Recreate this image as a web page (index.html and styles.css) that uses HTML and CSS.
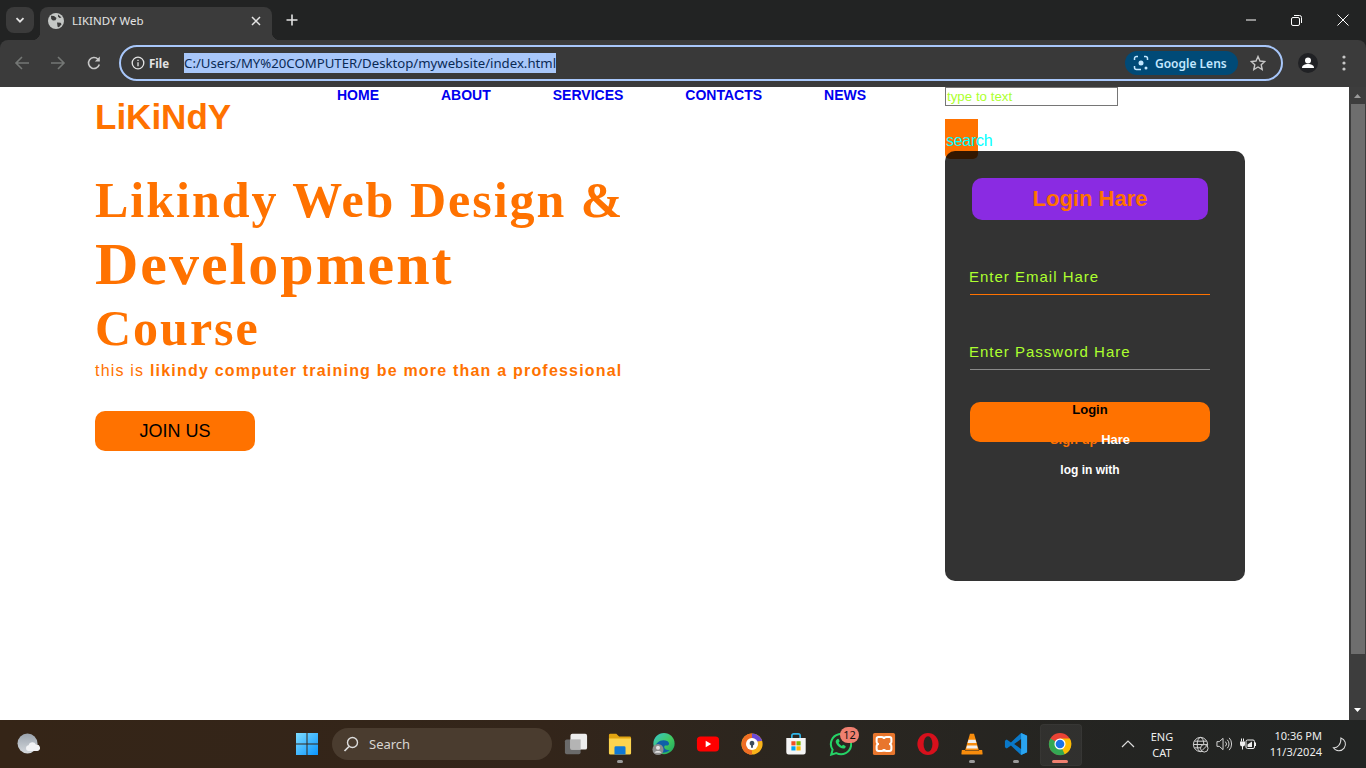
FILE: index.html
```html
<!DOCTYPE html>
<html lang="en">
<head>
<meta charset="utf-8">
<title>LIKINDY Web</title>
<link rel="stylesheet" href="styles.css">
</head>
<body>
<div class="chrome">
  <div class="tabstrip">
    <div class="tab-menu"><svg width="12" height="12" viewBox="0 0 12 12"><path d="M2.5 4.2 6 7.7l3.5-3.5" fill="none" stroke="#e3e3e3" stroke-width="1.8"/></svg></div>
    <div class="tab">
      <svg class="fav" width="16" height="16" viewBox="0 0 16 16"><circle cx="8" cy="8" r="8" fill="#c4c7c5"/><path d="M3 2.8 6 3l2.5 2-1 2.2-2.6.4L3.2 6ZM9 9.5l3.6.2 1 1.6-2.7 3-1.3-.5ZM10 1.5l3.5 3-2 .4L10 3.5Z" fill="#3b3b3b"/></svg>
      <span class="tab-title">LIKINDY Web</span>
      <svg class="tab-x" width="10" height="10" viewBox="0 0 10 10"><path d="M1 1l8 8M9 1 1 9" stroke="#e3e3e3" stroke-width="1.5"/></svg>
    </div>
    <svg class="new-tab" width="12" height="12" viewBox="0 0 12 12"><path d="M6 .5v11M.5 6h11" stroke="#e3e3e3" stroke-width="1.6"/></svg>
    <div class="win-controls">
      <svg width="10" height="2" viewBox="0 0 10 2"><path d="M0 1h10" stroke="#fff"/></svg>
      <svg width="11" height="11" viewBox="0 0 11 11"><rect x=".5" y="2.5" width="8" height="8" rx="1.5" fill="none" stroke="#fff"/><path d="M3 .5h5.5a2 2 0 0 1 2 2V8" fill="none" stroke="#fff"/></svg>
      <svg width="12" height="12" viewBox="0 0 12 12"><path d="M.5.5l11 11M11.500.5l-11 11" stroke="#fff"/></svg>
    </div>
  </div>
  <div class="toolbar">
    <svg class="nav-ic" width="16" height="16" viewBox="0 0 16 16"><path d="M15 8H2M8 2 2 8l6 6" fill="none" stroke="#747775" stroke-width="1.6"/></svg>
    <svg class="nav-ic" width="16" height="16" viewBox="0 0 16 16"><path d="M1 8h13M8 2l6 6-6 6" fill="none" stroke="#747775" stroke-width="1.6"/></svg>
    <svg class="nav-ic reload" width="16" height="16" viewBox="0 0 16 16"><path d="M13.300 9.500A5.500 5.500 0 1 1 12 4.200" fill="none" stroke="#c7c7c7" stroke-width="1.600"/><path d="M13.800 1.500v5h-5z" fill="#c7c7c7"/></svg>
    <div class="omnibox">
      <svg class="info" width="14" height="14" viewBox="0 0 14 14"><circle cx="7" cy="7" r="5.800" fill="none" stroke="#e3e3e3" stroke-width="1.300"/><path d="M7 6.300v4M7 3.700v1.400" stroke="#e3e3e3" stroke-width="1.300"/></svg>
      <span class="file-chip">File</span>
      <span class="url">C:/Users/MY%20COMPUTER/Desktop/mywebsite/index.html</span>
      <div class="lens">
        <svg width="16" height="16" viewBox="0 0 16 16"><path d="M1.500 5V3.500a2 2 0 0 1 2-2H5M11 1.500h1.500a2 2 0 0 1 2 2V5M1.500 11v1.500a2 2 0 0 0 2 2H8" fill="none" stroke="#c2e7ff" stroke-width="1.500"/><circle cx="8" cy="8" r="2.500" fill="#c2e7ff"/><circle cx="13" cy="13" r="1.500" fill="#c2e7ff"/></svg>
        <span>Google Lens</span>
      </div>
      <svg class="star" width="16" height="16" viewBox="0 0 16 16"><path d="M8 1.500 10 6l4.800.5-3.600 3.200 1 4.800L8 12l-4.200 2.500 1-4.800L1.200 6.500 6 6Z" fill="none" stroke="#c7c7c7" stroke-width="1.400"/></svg>
    </div>
    <div class="avatar"><svg width="20" height="20" viewBox="0 0 20 20"><circle cx="10" cy="10" r="10" fill="#202124"/><circle cx="10" cy="7.500" r="3" fill="#fff"/><path d="M4 15c0-3 3-4 6-4s6 1 6 4z" fill="#fff"/></svg></div>
    <svg class="dots" width="4" height="16" viewBox="0 0 4 16"><circle cx="2" cy="2" r="1.600" fill="#c7c7c7"/><circle cx="2" cy="8" r="1.600" fill="#c7c7c7"/><circle cx="2" cy="14" r="1.600" fill="#c7c7c7"/></svg>
  </div>
</div>

<div class="viewport">
  <main class="page">
    <div class="left-col">
      <header class="top-row">
        <h2 class="logo">LiKiNdY</h2>
        <nav class="menu">
          <a>HOME</a><a>ABOUT</a><a>SERVICES</a><a>CONTACTS</a><a>NEWS</a>
        </nav>
      </header>
      <section class="hero">
        <h1 class="hero-title"><span class="line">Likindy Web Design &amp;</span><span class="line big">Development</span><span class="line">Course</span></h1>
        <p class="hero-sub">this is <b>likindy computer training be more than a professional</b></p>
        <button class="join">JOIN US</button>
      </section>
    </div>
    <div class="right-col">
      <div class="search-box"><span class="search-input">type to text</span></div>
      <div class="search-btn">search</div>
      <form class="login-card">
        <h2 class="login-title">Login Hare</h2>
        <div class="field orange-line">Enter Email Hare</div>
        <div class="field grey-line">Enter Password Hare</div>
        <div class="login-btn">Login</div>
        <p class="signup"><span class="orange">Sign up</span> Hare</p>
        <p class="login-with">log in with</p>
      </form>
    </div>
  </main>
  <div class="scrollbar">
    <svg class="sb-arrow" width="17" height="17" viewBox="0 0 17 17"><path d="M5 11 8.500 7l3.500 4z" fill="#9a9a9a"/></svg>
    <div class="sb-track"><div class="sb-thumb"></div></div>
    <svg class="sb-arrow" width="17" height="17" viewBox="0 0 17 17"><path d="M5 5h7L8.500 9z" fill="#fff"/></svg>
  </div>
</div>

<footer class="taskbar">
  <svg class="weather" width="24" height="24" viewBox="0 0 24 24"><defs><linearGradient id="wm" x1="0" y1="0" x2="0" y2="1"><stop offset="0" stop-color="#9aa3ad"/><stop offset="1" stop-color="#d4d8dc"/></linearGradient></defs><circle cx="10.500" cy="11.500" r="10" fill="url(#wm)"/><path d="M11 19a3 3 0 0 1 .5-5.800 4 4 0 0 1 7.500-.5 3.200 3.200 0 0 1 1.500 6.300z" fill="#f2f3f5"/></svg>
  <svg class="start" width="24" height="24" viewBox="0 0 24 24"><defs><linearGradient id="wn" x1="0" y1="0" x2="1" y2="1"><stop offset="0" stop-color="#7ddcff"/><stop offset="1" stop-color="#0a95ff"/></linearGradient></defs><path d="M1 1h10.500v10.500H1zM12.500 1H23v10.500H12.500zM1 12.500h10.500V23H1zM12.500 12.500H23V23H12.500z" fill="url(#wn)"/></svg>
  <div class="tb-search">
    <svg width="16" height="16" viewBox="0 0 16 16"><circle cx="9.500" cy="6.500" r="5" fill="none" stroke="#ddd" stroke-width="1.400"/><path d="M6 10.500 1.500 15" stroke="#ddd" stroke-width="1.700"/></svg>
    <span>Search</span>
  </div>
  <div class="tb-apps">
    <div class="app"><svg viewBox="0 0 26 26"><rect x="1" y="8" width="17" height="16" rx="2" fill="#6a6a6a"/><rect x="7" y="2" width="18" height="17" rx="2" fill="#ededed"/><rect x="7" y="8" width="11" height="11" fill="#b4b4b4"/></svg></div>
    <div class="app running"><svg viewBox="0 0 26 26"><path d="M1 3.500a1.500 1.500 0 0 1 1.500-1.500H9l3 3h11.500A1.500 1.500 0 0 1 25 6.500V8H1z" fill="#e0a411"/><path d="M1 7h24v16a1.500 1.500 0 0 1-1.500 1.500h-21A1.500 1.500 0 0 1 1 23z" fill="#fbd44f"/><path d="M7 17a1.500 1.500 0 0 1 1.500-1.500h9A1.500 1.500 0 0 1 19 17v7.500H7z" fill="#0f78d4"/></svg></div>
    <div class="app"><svg viewBox="0 0 26 26"><defs><linearGradient id="eg" x1="0" y1="0" x2="1" y2="1"><stop offset="0" stop-color="#37c6d0"/><stop offset=".55" stop-color="#41c95f"/><stop offset="1" stop-color="#1aa35e"/></linearGradient></defs><circle cx="13" cy="12.500" r="11.500" fill="url(#eg)"/><path d="M3 18c1-8 8-11 14-8 2 1.500 2 4 0 4.500h-3c-2 2 0 5 5 5-4 4-11 4.500-16-1.500z" fill="#0f5fa8"/><circle cx="6.500" cy="19" r="6" fill="#8d8d8d"/><circle cx="6.500" cy="17" r="2.200" fill="#e3e3e3"/><path d="M2.700 22.500c.5-2.500 7-2.500 7.600 0z" fill="#e3e3e3"/></svg></div>
    <div class="app"><svg viewBox="0 0 26 26"><rect x="1" y="5" width="24" height="16" rx="4" fill="#f00"/><path d="M10.500 9.500v7l6-3.500z" fill="#fff"/></svg></div>
    <div class="app"><svg viewBox="0 0 26 26"><circle cx="13" cy="13" r="11.500" fill="#f9b31a"/><path d="M2 13A11 11 0 0 1 13 1.500v5A7 7 0 0 0 7 13c0 3 2 6 6 7v4.500C6 24.500 1.500 19 2 13z" fill="#ee6d24"/><path d="M13 1.500c5 0 9.500 3.500 11 8l-7 1a5 5 0 0 0-4-4z" fill="#6a4bd8"/><circle cx="13" cy="13" r="6.500" fill="#fff"/><path d="M13 9.500a2.600 2.600 0 0 0-1 5v2.500h2v-2.500a2.600 2.600 0 0 0-1-5z" fill="#3c4c5c"/></svg></div>
    <div class="app"><svg viewBox="0 0 26 26"><path d="M8.500 7V4a2 2 0 0 1 2-2h5a2 2 0 0 1 2 2v3" fill="none" stroke="#2fb5e8" stroke-width="1.800"/><path d="M2.500 6.500h21V22a2.500 2.500 0 0 1-2.500 2.500H5A2.500 2.500 0 0 1 2.500 22z" fill="#f5f5f5"/><rect x="8" y="10" width="4.500" height="4.500" fill="#f25022"/><rect x="13.500" y="10" width="4.500" height="4.500" fill="#7fba00"/><rect x="8" y="15.500" width="4.500" height="4.500" fill="#00a4ef"/><rect x="13.500" y="15.500" width="4.500" height="4.500" fill="#ffb900"/></svg></div>
    <div class="app"><svg viewBox="0 0 26 26"><path d="M3.500 24.500 5 19.200A11 11 0 1 1 9 22.800z" fill="none" stroke="#25d366" stroke-width="2.200"/><path d="M9.500 8c1-1 2-.8 2.400.2l.6 1.600c.2.600-.7 1.400-1 1.900.7 1.400 2 2.700 3.500 3.400.5-.5 1.300-1.400 1.900-1.100l1.600.8c1 .5.900 1.500 0 2.400-1 1-3 1-5.500-.5-2-1.200-3.500-2.800-4.300-4.800-.7-1.600-.3-2.900.8-3.900z" fill="#25d366"/></svg><span class="badge">12</span></div>
    <div class="app"><svg viewBox="0 0 26 26"><rect x="1" y="1" width="24" height="24" rx="2" fill="#e8762d"/><path d="M7 5.500h3.500c2 0 2.500 1.500 2.500 2 0-.5.500-2 2.500-2H19a2 2 0 0 1 2 2v3c0 1.500-1.500 2.500-2.500 2.500 1 0 2.500 1 2.500 2.500v3a2 2 0 0 1-2 2h-3.500c-2 0-2.500-1.500-2.500-2 0 .5-.500 2-2.500 2H7a2 2 0 0 1-2-2v-3c0-1.500 1.500-2.500 2.500-2.500C6.500 13 5 12 5 10.500v-3a2 2 0 0 1 2-2z" fill="none" stroke="#fff" stroke-width="2.200"/></svg></div>
    <div class="app"><svg viewBox="0 0 26 26"><ellipse cx="13" cy="13" rx="11.500" ry="12" fill="#d7101c"/><ellipse cx="13" cy="13" rx="4.800" ry="8.500" fill="#2b2722"/></svg></div>
    <div class="app running"><svg viewBox="0 0 26 26"><path d="M10.800 2h4.400l5.300 18H5.500z" fill="#f78c0c"/><path d="M9.200 8.500h7.600l1 3.500H8.200zM7.700 14.500h10.600l1 3.500H6.700z" fill="#efefef"/><path d="M2 19.500h3.500v1h15v-1H24l.5 4a1 1 0 0 1-1 1h-21a1 1 0 0 1-1-1z" fill="#f78c0c"/></svg></div>
    <div class="app running"><svg viewBox="0 0 26 26"><path d="M18.500 1 25 4v18l-6.500 3-11-10.500L3 18l-2-1.500v-7L3 8l4.500 3.500z" fill="#0a78c8"/><path d="M18.500 1 25 4v18l-6.500 3z" fill="#2aa4f0"/><path d="M18.500 7.500v11L11 13z" fill="#262622"/></svg></div>
    <div class="app active"><svg viewBox="0 0 26 26"><circle cx="13" cy="13" r="12" fill="#ea4335"/><path d="M13 13 2.600 7A12 12 0 0 0 8 24zM13 13 8 24A12 12 0 0 0 25 13z" fill="#34a853"/><path d="M13 7h10.700A12 12 0 0 1 18 24L13 13z" fill="#fbbc04"/><circle cx="13" cy="13" r="6" fill="#fff"/><circle cx="13" cy="13" r="4.700" fill="#1a73e8"/></svg></div>
  </div>
  <div class="tray">
    <svg class="chev" width="14" height="8" viewBox="0 0 14 8"><path d="M1 7 7 1l6 6" fill="none" stroke="#ddd" stroke-width="1.200"/></svg>
    <div class="lang"><span>ENG</span><span>CAT</span></div>
    <svg class="tray-ic globe" width="17" height="17" viewBox="0 0 18 18"><g fill="none" stroke="#ddd"><circle cx="9" cy="9" r="7.500"/><ellipse cx="9" cy="9" rx="3.500" ry="7.500"/><path d="M1.500 9h15M2.500 5.500h13M2.500 12.500h13"/></g><circle cx="13" cy="13" r="4" fill="#242422" stroke="#ddd"/><path d="M10.500 15.500l5-5" stroke="#ddd"/></svg>
    <svg class="tray-ic vol" width="16" height="16" viewBox="0 0 17 16"><g fill="none" stroke="#ddd"><path d="M1 5.500h2.500L7.500 2v12l-4-3.500H1z"/><path d="M10 5.500a3.500 3.500 0 0 1 0 5M12 3.500a6.500 6.500 0 0 1 0 9M14 1.500a9.500 9.500 0 0 1 0 13"/></g></svg>
    <svg class="tray-ic batt" width="16" height="12" viewBox="0 0 16 12"><path d="M0 3.500h5v2.500a2.500 2.500 0 0 1-5 0z" fill="#eee"/><path d="M1.500 .5v3M3.500 .5v3M2.500 8v3.500" stroke="#eee"/><rect x="6" y="2" width="8.500" height="8.500" rx="1.500" fill="none" stroke="#eee"/><path d="M7.500 9V6.500L12 3.500V9z" fill="#eee"/><path d="M15.500 4.500v3.500" stroke="#eee"/></svg>
    <div class="clock"><span>10:36 PM</span><span>11/3/2024</span></div>
    <svg class="moon" width="15" height="15" viewBox="0 0 16 16"><path d="M9.500 1a7 7 0 1 1-8 10.500c4 .5 8.500-3.500 8-10.500z" fill="none" stroke="#ddd" stroke-width="1.100"/></svg>
  </div>
</footer>
</body>
</html>
```
FILE: styles.css
```css
* { box-sizing: border-box; }
html, body { margin: 0; padding: 0; height: 100%; overflow: hidden; }
body { width: 1366px; height: 768px; display: flex; flex-direction: column; font-family: "Liberation Sans", Arial, sans-serif; background: #fff; }

/* browser chrome */
.chrome { height: 87px; flex: none; background: #222323; font-family: "Noto Sans", "Open Sans", sans-serif; }
.tabstrip { height: 40px; display: flex; align-items: flex-start; padding: 7px 0 0 6px; }
.tab-menu { width: 28px; height: 26px; background: #3b3b3b; border-radius: 8px; display: flex; align-items: center; justify-content: center; }
.tab { width: 232px; height: 33px; margin-left: 6px; background: #3b3b3b; border-radius: 8px 8px 0 0; display: flex; align-items: center; padding: 0 11px 6px 8px; position: relative; }
.tab::before, .tab::after { content: ""; position: absolute; bottom: 0; width: 8px; height: 8px; }
.tab::before { left: -8px; background: radial-gradient(circle at 0 0, transparent 8px, #3b3b3b 8.5px); }
.tab::after { right: -8px; background: radial-gradient(circle at 100% 0, transparent 8px, #3b3b3b 8.5px); }
.fav { flex: none; }
.tab-title { margin-left: 8px; font-size: 11.500px; color: #e3e3e3; flex: 1; }
.new-tab { margin: 7px 0 0 14px; }
.win-controls { margin-left: auto; display: flex; align-items: center; height: 26px; padding-right: 17px; gap: 35px; }
.toolbar { height: 47px; background: #3b3b3b; display: flex; align-items: center; padding: 0 0 1px 14px; border-radius: 8px 8px 0 0; }
.nav-ic { margin-right: 20px; flex: none; }
.nav-ic.reload { margin-right: 17px; }
.omnibox { width: 1164px; height: 36px; border: 2px solid #a8c7fa; border-radius: 18px; background: #393939; display: flex; align-items: center; padding: 0 15px 0 10px; flex: none; }
.info { flex: none; }
.file-chip { margin-left: 4px; font-size: 11.500px; font-weight: 700; color: #e3e3e3; }
.url { margin-left: 15px; background: #a8c7fa; color: #0a2a55; font-size: 13.200px; line-height: 20px; height: 20px; white-space: nowrap; }
.lens { margin-left: auto; width: 113px; height: 24px; background: #004a77; border-radius: 12px; display: flex; align-items: center; padding: 0 0 0 8px; gap: 6px; color: #c2e7ff; font-size: 12px; font-weight: 600; white-space: nowrap; }
.star { margin-left: 12px; }
.avatar { margin-left: 15px; height: 20px; }
.dots { margin-left: 24px; }

/* page */
.viewport { flex: 1; display: flex; min-height: 0; background: #fff; }
.page { flex: 1; display: flex; padding-left: 95px; min-width: 0; }
.left-col { width: 850px; flex: none; }
.top-row { display: flex; height: 50px; }
.logo { margin: 10px 0 0; width: 242px; font-size: 35px; line-height: 40px; font-weight: 700; color: #ff7200; }
.menu { display: flex; gap: 62px; height: 16px; }
.menu a { font-size: 14px; line-height: 16px; font-weight: 700; color: #0000ee; }
.hero { padding-top: 31px; }
.hero-title { margin: 0; font-family: "Liberation Serif", "Times New Roman", serif; font-size: 50px; letter-spacing: 2px; font-weight: 700; color: #ff7200; }
.line { display: block; line-height: 64px; }
.big { font-size: 60px; }
.hero-sub { margin: 1px 0 0; font-size: 16px; line-height: 20px; letter-spacing: 1.200px; color: #ff7200; }
.join { display: block; margin-top: 30px; width: 160px; height: 40px; border: 0; border-radius: 10px; background: #ff7200; color: #000; font: 18px "Liberation Sans", Arial, sans-serif; }

.right-col { width: 300px; flex: none; position: relative; }
.search-box { height: 19px; }
.search-input { display: block; width: 173px; height: 19px; border: 1px solid #767676; padding: 0 1px; font-size: 13.330px; line-height: 17px; color: #adff2f; }
.search-btn { margin-top: 13px; width: 33px; height: 40px; background: #ff7200; border-radius: 0 0 5px 5px; color: #00ffff; font-size: 16px; letter-spacing: -.3px; line-height: 18px; padding: 13px 0 0 1px; white-space: nowrap; }
.login-card { position: absolute; left: 0; top: 64px; width: 300px; height: 430px; background: rgba(0,0,0,.8); border-radius: 10px; padding: 27px 25px; }
.login-title { margin: 0 0 0 2px; width: 236px; height: 42px; background: #8a2be2; border-radius: 10px; text-align: center; color: #ff7200; font-size: 22px; line-height: 41px; font-weight: 700; }
.field { width: 240px; height: 35px; font-size: 15px; line-height: 34px; letter-spacing: 1px; text-indent: -1px; color: #adff2f; }
.orange-line { margin-top: 40px; border-bottom: 1px solid #ff7200; }
.grey-line { margin-top: 40px; border-bottom: 1px solid #8a8a8a; }
.login-btn { margin-top: 32px; width: 240px; height: 40px; background: #ff7200; border-radius: 10px; text-align: center; font-size: 13px; font-weight: 700; line-height: 15px; color: #000; }
.signup, .login-with { margin: 0; width: 240px; text-align: center; font-weight: 700; line-height: 14px; color: #fff; }
.signup { margin-top: -9px; font-size: 13px; }
.login-with { margin-top: 16px; font-size: 12px; }
.orange { color: #ff7200; }

.scrollbar { width: 17px; flex: none; background: #3d3d3d; display: flex; flex-direction: column; }
.sb-arrow { flex: none; }
.sb-track { flex: 1; }
.sb-thumb { width: 14px; margin: 0 1px 0 2px; height: 550px; background: #6e6e6e; }

/* taskbar */
.taskbar { height: 48px; flex: none; display: flex; align-items: center; position: relative; background: linear-gradient(90deg, #352517 0%, #33251a 40%, #2a2620 60%, #232422 85%, #222423 100%); font-family: "Noto Sans", "Open Sans", sans-serif; color: #eee; }
.weather { margin-left: 17px; flex: none; }
.start { margin-left: 254px; flex: none; }
.tb-search { margin-left: 13px; width: 220px; height: 32px; background: #4a3c2f; border-radius: 16px; display: flex; align-items: center; gap: 10px; padding-left: 11px; font-size: 13px; color: #d9d6d2; }
.tb-apps { display: flex; margin-left: 2px; }
.app { width: 44px; height: 48px; display: flex; align-items: center; justify-content: center; position: relative; flex: none; }
.app svg { position: relative; width: 24px; height: 24px; }
.app.running::after { content: ""; position: absolute; left: 19px; bottom: 5px; width: 6px; height: 3px; border-radius: 2px; background: #9a9a9a; }
.app.active::before { content: ""; position: absolute; left: 2px; top: 4px; width: 40px; height: 40px; border-radius: 4px; background: rgba(255,255,255,.06); border: 1px solid rgba(255,255,255,.03); }
.app.active::after { content: ""; position: absolute; left: 14px; bottom: 5px; width: 16px; height: 3px; border-radius: 2px; background: #f08070; }
.badge { position: absolute; left: 22px; top: 7px; width: 19px; height: 16px; border-radius: 8px; background: #f08070; color: #111; font-size: 11px; line-height: 16px; text-align: center; }
.tray { position: absolute; left: 1121px; top: 0; height: 48px; display: flex; align-items: center; }
.chev { flex: none; }
.lang { margin-left: 15px; padding-top: 2px; display: flex; flex-direction: column; align-items: center; font-size: 11px; line-height: 16px; color: #eee; width: 24px; }
.tray-ic { flex: none; }
.globe { margin-left: 18px; margin-right: 7px; }
.vol { margin-right: 8px; }
.clock { margin-left: 14px; display: flex; flex-direction: column; align-items: flex-end; font-size: 11px; line-height: 16px; width: 52px; }
.moon { margin-left: 10px; }
```
